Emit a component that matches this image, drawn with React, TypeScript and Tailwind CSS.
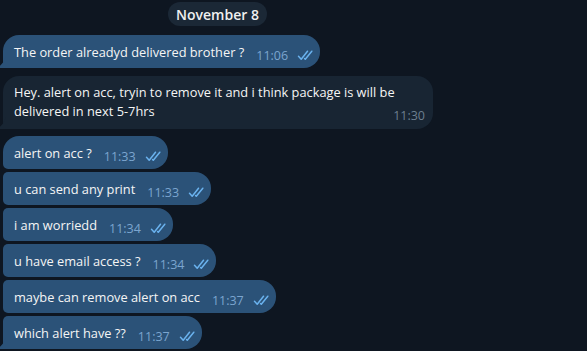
import React from 'react';

type Msg = {
  text: string;
  time: string;
  // position inside a group of consecutive bubbles
  pos: 'single' | 'first' | 'middle' | 'last';
};

const group: Msg[] = [
  { text: 'alert on acc ?', time: '11:33', pos: 'first' },
  { text: 'u can send any print', time: '11:33', pos: 'middle' },
  { text: 'i am worriedd', time: '11:34', pos: 'middle' },
  { text: 'u have email access ?', time: '11:34', pos: 'middle' },
  { text: 'maybe can remove alert on acc', time: '11:37', pos: 'middle' },
  { text: 'which alert have ??', time: '11:37', pos: 'last' },
];

const corners = {
  single: 'rounded-[16px] rounded-bl-none',
  first: 'rounded-[16px] rounded-bl-[5px]',
  middle: 'rounded-[16px] rounded-tl-[5px] rounded-bl-[5px]',
  last: 'rounded-[16px] rounded-tl-[5px] rounded-bl-none',
};

const DoubleCheck = () => (
  <svg width="17" height="11" viewBox="0 0 17 11" fill="none" className="shrink-0">
    <path d="M1.5 6.2 L4.2 9.2 L10.5 1.2" stroke="#6ab2ee" strokeWidth="1.5" strokeLinecap="round" strokeLinejoin="round" />
    <path d="M7.6 8.6 L8.3 9.2 L14.8 1.2" stroke="#6ab2ee" strokeWidth="1.5" strokeLinecap="round" strokeLinejoin="round" />
  </svg>
);

const Tail = ({ color }: { color: string }) => (
  <svg width="8" height="12" viewBox="0 0 8 12" className="absolute bottom-0 -left-[5px]">
    <path d="M8 0 L8 12 L1 12 C0 12 0 11 1 10.4 C4.5 8 6.5 5 8 0 Z" fill={color} />
  </svg>
);

const OutBubble = ({ msg }: { msg: Msg }) => (
  <div className={`relative flex items-end bg-[#2b5278] h-[33px] pl-[11px] pr-[6px] pb-[6px] ${corners[msg.pos]}`}>
    {(msg.pos === 'single' || msg.pos === 'last') && <Tail color="#2b5278" />}
    <span className="text-[12.8px] leading-[19px] text-[#f5f5f5] whitespace-nowrap">{msg.text}</span>
    <span className="ml-[12px] text-[12.5px] leading-[14px] text-[#7ba5cf] translate-y-[1px]">{msg.time}</span>
    <span className="ml-[9px] mb-[1px]">
      <DoubleCheck />
    </span>
  </div>
);

export default function App() {
  return (
    <div
      className="w-[587px] h-[351px] overflow-hidden bg-[#0e1621] pt-[2px]"
      style={{ fontFamily: '"Open Sans", "Noto Sans", sans-serif' }}
    >
      <div className="ml-[168px] w-[99px] h-[24px] rounded-full bg-[#1b2836] flex items-center justify-center">
        <span className="text-[14px] font-semibold text-[#f0f0f0]">November 8</span>
      </div>

      <div className="flex flex-col items-start pl-[3px] mt-[9px]">
        <OutBubble msg={{ text: 'The order alreadyd delivered brother ?', time: '11:06', pos: 'single' }} />

        <div className="relative mt-[8px] w-[430px] bg-[#182533] rounded-[16px] rounded-bl-none pl-[11px] pr-[8px] pt-[7px] pb-[6px]">
          <Tail color="#182533" />
          <p className="text-[12.8px] leading-[19px] text-[#f5f5f5]">
            Hey. alert on acc, tryin to remove it and i think package is will be delivered in next 5-7hrs
          </p>
          <div className="flex justify-end -mt-[12px]">
            <span className="text-[12.5px] leading-[14px] text-[#6d7f8f]">11:30</span>
          </div>
        </div>

        <div className="flex flex-col items-start gap-[3px] mt-[7px]">
          {group.map((m, i) => (
            <OutBubble key={i} msg={m} />
          ))}
        </div>
      </div>
    </div>
  );
}
